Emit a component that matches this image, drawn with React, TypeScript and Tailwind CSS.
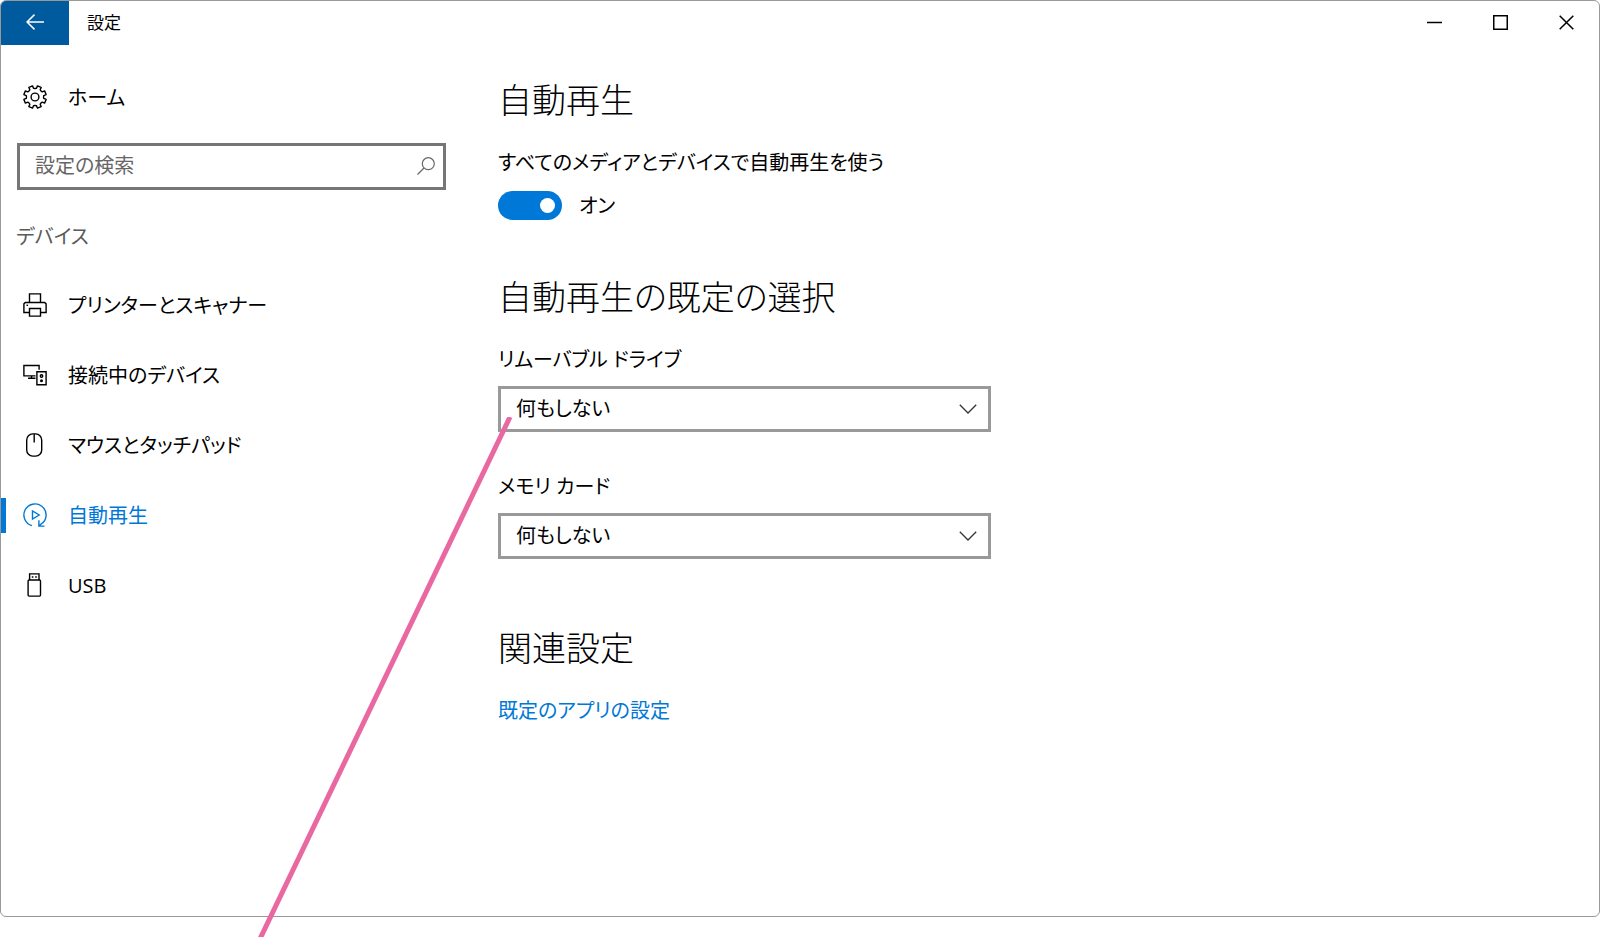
import type { ReactNode } from "react";

function Icon({ children }: { children: ReactNode }) {
  return (
    <svg
      viewBox="0 0 24 24"
      className="size-6 shrink-0"
      fill="none"
      stroke="currentColor"
      strokeWidth="1.4"
      aria-hidden="true"
    >
      {children}
    </svg>
  );
}

function gearOutline() {
  const points: string[] = [];
  const at = (radius: number, degrees: number) => {
    const a = (degrees * Math.PI) / 180;
    points.push(`${(12 + radius * Math.cos(a)).toFixed(2)},${(12 + radius * Math.sin(a)).toFixed(2)}`);
  };
  for (let tooth = 0; tooth < 8; tooth++) {
    const mid = tooth * 45 + 22.5;
    at(8.6, mid - 18);
    at(8.9, mid - 13);
    at(11.4, mid - 10);
    at(11.4, mid + 10);
    at(8.9, mid + 13);
    at(8.6, mid + 18);
  }
  return points.join(" ");
}

const GearIcon = () => (
  <Icon>
    <polygon points={gearOutline()} strokeLinejoin="round" />
    <circle cx="12" cy="12" r="3.9" />
  </Icon>
);

const PrinterIcon = () => (
  <Icon>
    <path d="M6.5 9.5V.9h11v8.6M6.5 19.5H.9v-8.6l1.4-1.4h19.4l1.4 1.4v8.6h-5.6" />
    <path d="M6.5 15.5h11v7.6h-11z" />
    <path d="M3.5 12.3h1.6" />
  </Icon>
);

const DevicesIcon = () => (
  <Icon>
    <path d="M12.5 12.9H.9V2.5h15.2v4.2M5 15.3h7.5M8.5 12.9v2.4" />
    <path d="M13.9 8.7h9.2v13.1h-9.2z" />
    <circle cx="18.5" cy="13" r="1.2" />
    <circle cx="18.5" cy="17.7" r="0.8" />
  </Icon>
);

const MouseIcon = () => (
  <Icon>
    <rect x="3.7" y=".9" width="15" height="22.2" rx="6" />
    <path d="M11.2 1v8.5" />
  </Icon>
);

const AutoplayIcon = () => (
  <Icon>
    <path d="M9 22.7A11.1 11.1 0 1 1 19.4 20.3" />
    <path d="M15.9 17.2v5.9h5.6M16.2 22.8l3.4-3" />
    <path d="M9.5 7.9v8.2l6.7-4.1z" />
  </Icon>
);

const UsbIcon = () => (
  <Icon>
    <rect x="5.1" y="7" width="12.4" height="16.1" rx="1" />
    <path d="M6.6 7V.9h9.4V7M8.8 4h1.6M12.2 4h1.6" />
  </Icon>
);

const navItems = [
  { label: "プリンターとスキャナー", icon: <PrinterIcon /> },
  { label: "接続中のデバイス", icon: <DevicesIcon /> },
  { label: "マウスとタッチパッド", icon: <MouseIcon /> },
  { label: "自動再生", icon: <AutoplayIcon />, active: true },
  { label: "USB", icon: <UsbIcon /> },
];

function TitleBar() {
  return (
    <header className="flex h-11 items-center">
      <button
        type="button"
        aria-label="戻る"
        className="flex h-full w-17 items-center justify-center rounded-tl-[5px] bg-[#005a9e] pb-[2px] text-white"
      >
        <svg viewBox="0 0 18 16" className="h-4 w-[18px]" fill="none" stroke="currentColor" strokeWidth="1.5" aria-hidden="true">
          <path d="M18 8H1M8.5.6 1 8l7.5 7.4" />
        </svg>
      </button>
      <span className="ml-[18px] text-[17px]">設定</span>
      <div className="ml-auto flex h-full pb-[2px]">
        <button type="button" aria-label="最小化" className="flex w-[66px] items-center justify-center">
          <svg viewBox="0 0 15 15" className="size-[15px]" fill="none" stroke="currentColor" strokeWidth="1.5" aria-hidden="true">
            <path d="M0 7.5h15" />
          </svg>
        </button>
        <button type="button" aria-label="最大化" className="flex w-[66px] items-center justify-center">
          <svg viewBox="0 0 15 15" className="size-[15px]" fill="none" stroke="currentColor" strokeWidth="1.5" aria-hidden="true">
            <path d="M.75.75h13.5v13.5H.75z" />
          </svg>
        </button>
        <button type="button" aria-label="閉じる" className="flex w-[66px] items-center justify-center">
          <svg viewBox="0 0 15 15" className="size-[15px]" fill="none" stroke="currentColor" strokeWidth="1.5" aria-hidden="true">
            <path d="m.7.7 13.6 13.6M14.3.7.7 14.3" />
          </svg>
        </button>
      </div>
    </header>
  );
}

function Sidebar() {
  return (
    <aside className="w-[445px] shrink-0 pt-[34px]">
      <a href="#home" className="flex h-9 items-center gap-[21px] pl-[22px]">
        <GearIcon />
        <span className="pt-px">ホーム</span>
      </a>
      <label className="mt-7 ml-4 flex h-[47px] items-center border-3 border-[#767676] pr-2 pb-[2px] pl-[15px] text-[#666]">
        <input
          type="text"
          aria-label="設定の検索"
          placeholder="設定の検索"
          className="min-w-0 flex-1 bg-transparent outline-none placeholder:text-[#666] placeholder:opacity-100"
        />
        <svg viewBox="0 0 18 18" className="size-[18px]" fill="none" stroke="currentColor" strokeWidth="1.2" aria-hidden="true">
          <circle cx="11.3" cy="6.7" r="6" />
          <path d="M7 11 .5 17.5" />
        </svg>
      </label>
      <h2 className="mt-[31px] ml-[15px] h-[30px] leading-[32px] text-[#5a5a5a]">デバイス</h2>
      <nav className="mt-[19px]">
        {navItems.map((item) => (
          <a
            key={item.label}
            href="#device"
            aria-current={item.active ? "page" : undefined}
            className={item.active ? "flex h-[70px] items-center text-[#0078d7]" : "flex h-[70px] items-center"}
          >
            <span className={item.active ? "h-[35px] w-[5px] bg-[#0078d7]" : "h-[35px] w-[5px]"} />
            <span className="flex items-center gap-[21px] pl-[17px]">
              {item.icon}
              <span className="pt-px">{item.label}</span>
            </span>
          </a>
        ))}
      </nav>
    </aside>
  );
}

function ActionSelect({ id, label }: { id: string; label: string }) {
  return (
    <div className="max-w-[493px]">
      <label htmlFor={id} className="block h-[30px] leading-[32px]">
        {label}
      </label>
      <div className="mt-3 grid items-center">
        <select
          id={id}
          className="col-start-1 row-start-1 h-[46px] w-full appearance-none border-3 border-[#999] bg-white pr-12 pb-px pl-[15px] outline-none"
        >
          <option>何もしない</option>
        </select>
        <svg
          viewBox="0 0 18 10"
          className="pointer-events-none col-start-1 row-start-1 mr-[14px] h-[10px] w-[18px] justify-self-end"
          fill="none"
          stroke="#333"
          strokeWidth="1.3"
          aria-hidden="true"
        >
          <path d="m.8.8 8.2 8.2L17.2.8" />
        </svg>
      </div>
    </div>
  );
}

function Heading({ children }: { children: ReactNode }) {
  return <h1 className="h-[50px] text-[34px] leading-[50px] font-light">{children}</h1>;
}

function AutoplaySettings() {
  return (
    <main className="ml-[52px] min-w-0 flex-1 pt-[30px] pr-8">
      <Heading>自動再生</Heading>
      <label htmlFor="autoplay" className="mt-[22px] block h-[30px] leading-[32px]">
        すべてのメディアとデバイスで自動再生を使う
      </label>
      <div className="mt-[14px] flex h-[29px] items-center gap-[17px]">
        <input
          id="autoplay"
          type="checkbox"
          role="switch"
          defaultChecked
          className="flex h-[29px] w-16 appearance-none items-center rounded-full bg-[#999] px-[7px] before:size-[15px] before:rounded-full before:bg-white checked:justify-end checked:bg-[#0078d7]"
        />
        <span>オン</span>
      </div>
      <section className="mt-[52px]">
        <Heading>自動再生の既定の選択</Heading>
        <div className="mt-[22px] flex flex-col gap-[39px]">
          <ActionSelect id="removable" label="リムーバブル ドライブ" />
          <ActionSelect id="memory" label="メモリ カード" />
        </div>
      </section>
      <section className="mt-16">
        <Heading>関連設定</Heading>
        <a href="#apps" className="mt-[22px] inline-block leading-[32px] text-[#0078d7]">
          既定のアプリの設定
        </a>
      </section>
    </main>
  );
}

export default function App() {
  return (
    <div className="relative flex min-h-screen flex-col overflow-hidden bg-white pb-5 font-['Open_Sans','Noto_Sans_CJK_JP',sans-serif] text-[20px] text-black [font-feature-settings:'palt']">
      <div className="flex-1 rounded-md border border-[#999]">
        <TitleBar />
        <div className="flex">
          <Sidebar />
          <AutoplaySettings />
        </div>
      </div>
      <svg
        className="pointer-events-none absolute top-[417px] left-[255px] h-[526px] w-[260px]"
        viewBox="0 0 260 526"
        aria-hidden="true"
      >
        <path d="M255 0 3 526" stroke="#ea68a2" strokeWidth="5" />
      </svg>
    </div>
  );
}
